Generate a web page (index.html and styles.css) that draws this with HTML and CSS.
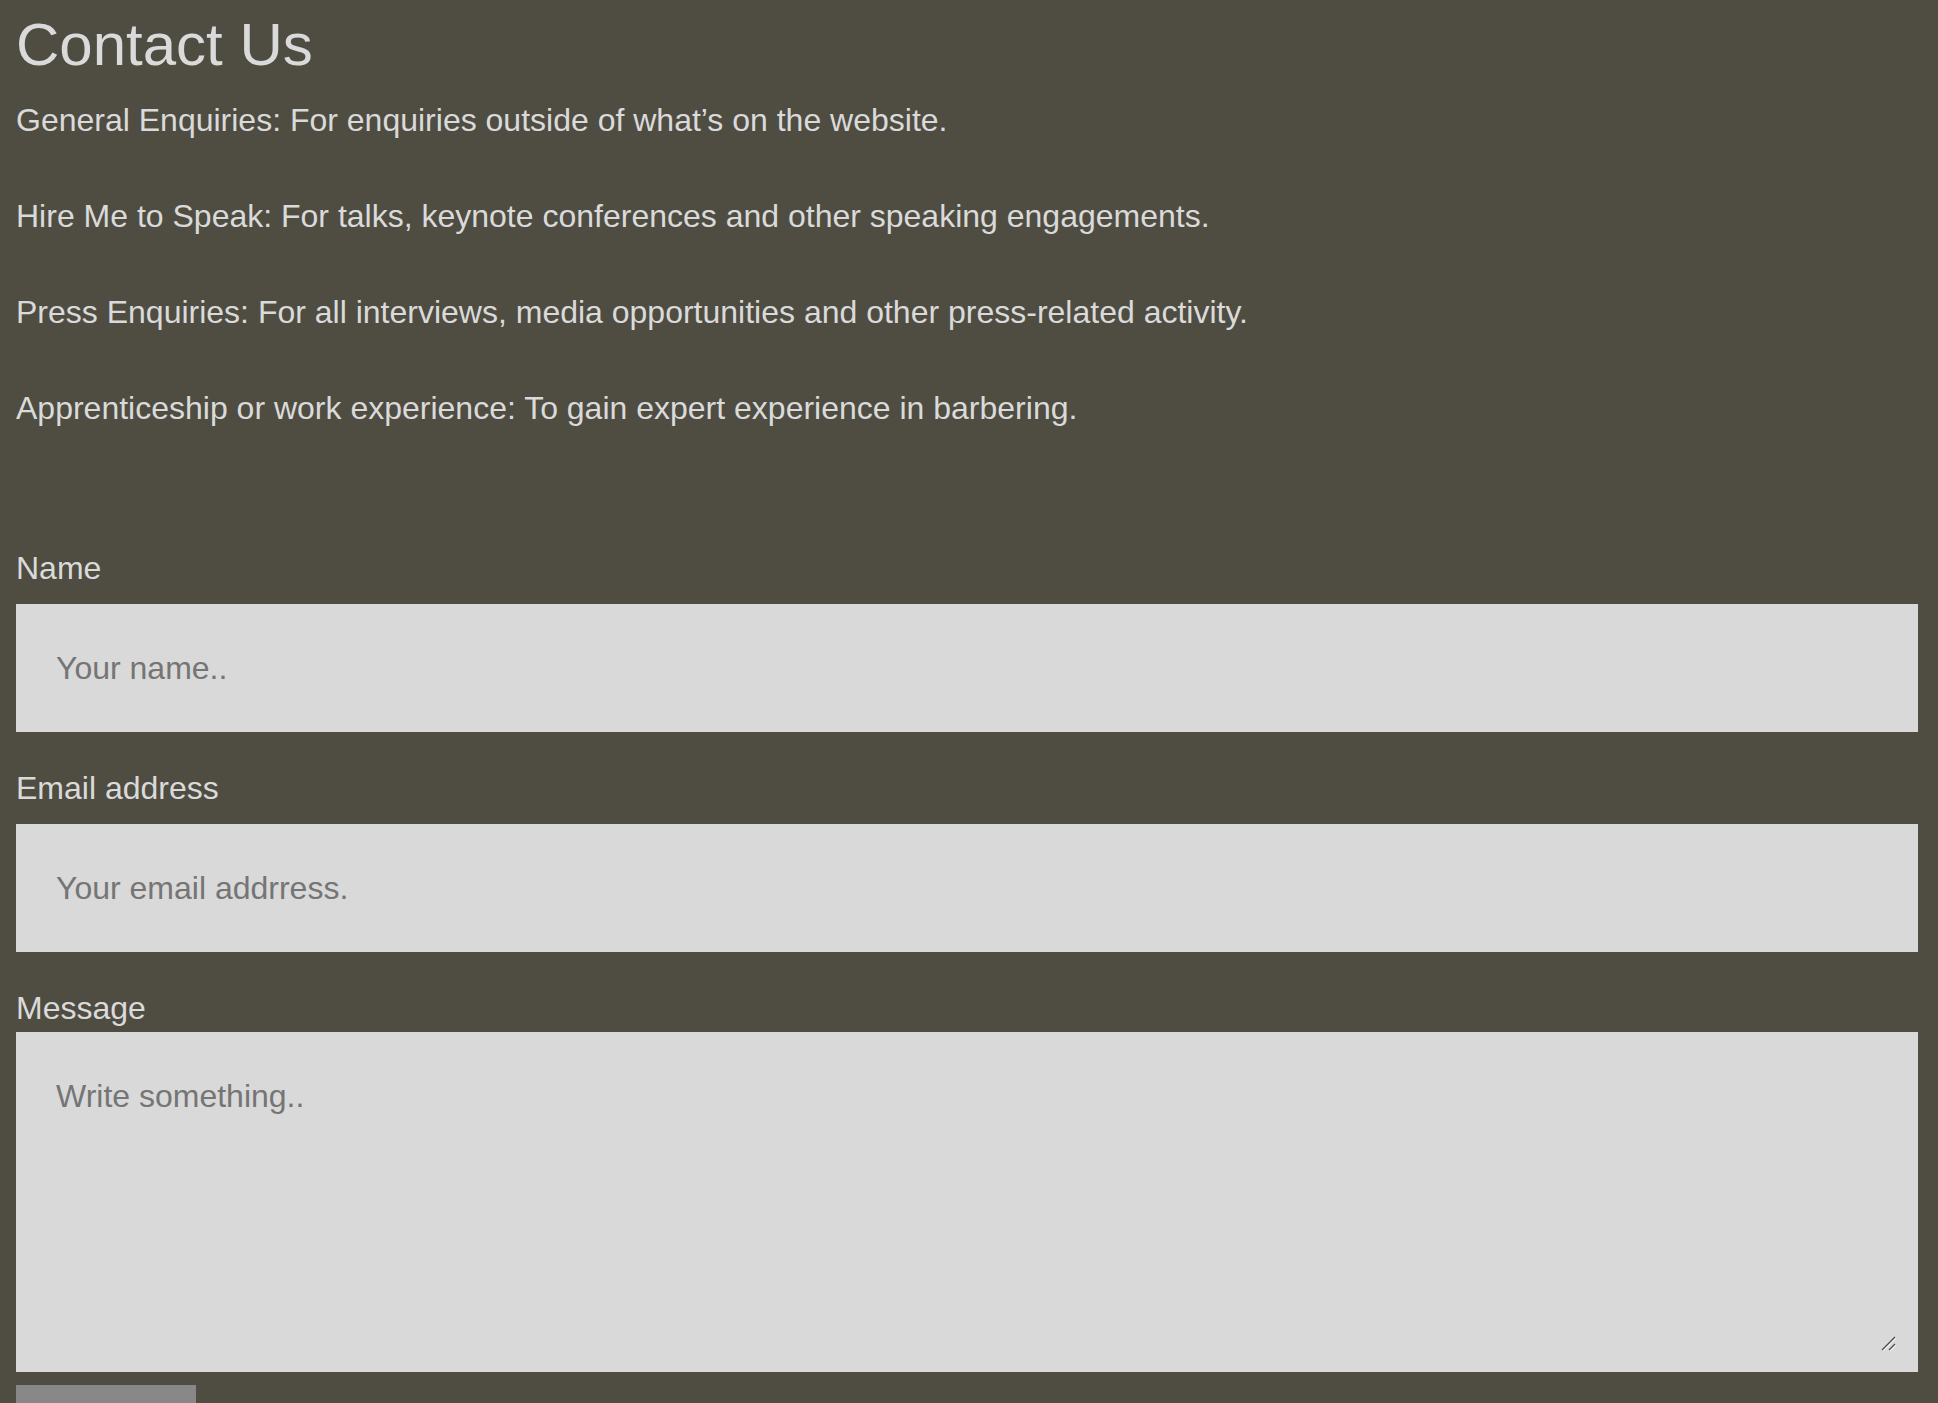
FILE: index.html
```html
<!DOCTYPE html>
<html lang="en">
<head>
<meta charset="utf-8">
<title>Contact Us</title>
<link rel="stylesheet" href="styles.css">
</head>
<body>
<main class="page">
  <h1 class="title">Contact Us</h1>
  <p class="info">General Enquiries: For enquiries outside of what’s on the website.</p>
  <p class="info">Hire Me to Speak: For talks, keynote conferences and other speaking engagements.</p>
  <p class="info">Press Enquiries: For all interviews, media opportunities and other press-related activity.</p>
  <p class="info">Apprenticeship or work experience: To gain expert experience in barbering.</p>
  <form class="contact-form">
    <label class="field-label" for="name">Name</label>
    <input class="field" type="text" id="name" placeholder="Your name..">
    <label class="field-label" for="email">Email address</label>
    <input class="field" type="email" id="email" placeholder="Your email addrress.">
    <label class="field-label" for="message">Message</label>
    <div class="area-wrap">
      <textarea class="field field-area" id="message" placeholder="Write something.."></textarea>
      <svg class="grip" width="15" height="15" viewBox="0 0 15 15" aria-hidden="true">
        <line x1="1" y1="14" x2="14" y2="1" stroke="#ffffff" stroke-width="1.2" stroke-opacity="0.7" transform="translate(1,1)"/>
        <line x1="1" y1="14" x2="14" y2="1" stroke="#4a4a4a" stroke-width="1.2"/>
        <line x1="8" y1="14" x2="14" y2="8" stroke="#ffffff" stroke-width="1.2" stroke-opacity="0.7" transform="translate(1,1)"/>
        <line x1="8" y1="14" x2="14" y2="8" stroke="#4a4a4a" stroke-width="1.2"/>
      </svg>
    </div>
    <button class="submit" type="submit">Submit</button>
  </form>
</main>
</body>
</html>
```
FILE: styles.css
```css
html, body {
  margin: 0;
  background: #4f4d42;
}
body {
  font-family: "Liberation Sans", Arial, Helvetica, sans-serif;
  font-size: 32px;
  color: #dadada;
}
.page {
  padding: 10px 20px 40px 16px;
}
.title {
  font-size: 60px;
  font-weight: normal;
  line-height: 69px;
  margin: 0 0 23px;
}
.info {
  line-height: 36px;
  margin: 0 0 60px;
}
.contact-form {
  padding-top: 64px;
}
.field-label {
  display: block;
  line-height: 36px;
}
.field {
  display: block;
  box-sizing: border-box;
  width: 100%;
  height: 128px;
  margin: 18px 0 38px;
  padding: 46px 40px;
  border: none;
  outline: none;
  background: #d9d9d9;
  font-family: "Liberation Sans", Arial, Helvetica, sans-serif;
  font-size: 32px;
  line-height: 36px;
  color: #333;
}
.field::placeholder {
  color: #757575;
}
.area-wrap {
  position: relative;
  margin: 6px 0 13px;
}
.field-area {
  height: 340px;
  margin: 0;
  resize: none;
}
.grip {
  position: absolute;
  right: 22px;
  bottom: 21px;
}
.submit {
  display: block;
  width: 180px;
  height: 100px;
  padding: 60px 0 0;
  border: none;
  background: linear-gradient(#878787, #8c8c8c);
  color: #dadada;
  font-family: "Liberation Sans", Arial, Helvetica, sans-serif;
  font-size: 32px;
}
```
